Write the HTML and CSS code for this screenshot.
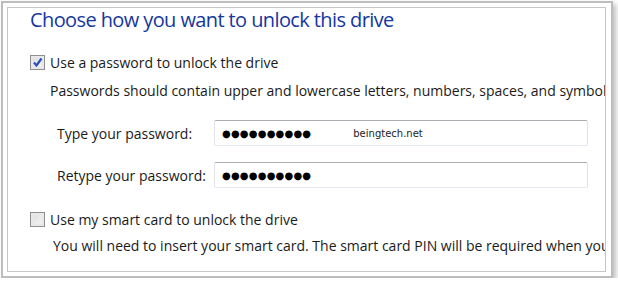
FILE: index.html
```
<!doctype html>
<html lang="en">
<head>
    <meta charset="UTF-8">
    <link rel="stylesheet" href="styles.css">
    <title>BitLocker - unlock options</title>
</head>
<body>
    <div class="frame">
        <div class="panel">
            <h1>Choose how you want to unlock this drive</h1>

            <div class="option">
                <span class="check checked">
                    <svg width="11" height="11" viewBox="0 0 11 11"><path d="M2 5.5 L4.5 8.5 L9.5 1.5" fill="none" stroke="#2d4fbf" stroke-width="2.2"/></svg>
                </span>
                <span>Use a password to unlock the drive</span>
            </div>
            <p class="desc">Passwords should contain upper and lowercase letters, numbers, spaces, and symbols.</p>

            <div class="field first">
                <label>Type your password:</label>
                <div class="box"><span class="dots">●●●●●●●●●●</span><span class="mark">beingtech.net</span></div>
            </div>
            <div class="field">
                <label>Retype your password:</label>
                <div class="box"><span class="dots">●●●●●●●●●●</span></div>
            </div>

            <div class="option second">
                <span class="check"></span>
                <span>Use my smart card to unlock the drive</span>
            </div>
            <p class="desc desc2">You will need to insert your smart card. The smart card PIN will be required when you unlock the drive.</p>
        </div>
    </div>
</body>
</html>
```

FILE: styles.css
```
body{
    margin: 0;
    background: #fff;
    font-family: "Open Sans", "Noto Sans", sans-serif;
    color: #1a1a1a;
}
.frame{
    box-sizing: border-box;
    width: 612px;
    height: 277px;
    margin: 1px 0 0 1px;
    border: 2px solid #bdbdbd;
    padding: 4px 5px 4px 4px;
    box-shadow: 3px 3px 5px rgba(0,0,0,0.25);
    display: flex;
}
.panel{
    flex: 1;
    border: 1px solid #c6c6c6;
    overflow: hidden;
    white-space: nowrap; /* long lines run under the right edge, as in the dialog */
    padding-left: 22px;
}
h1{
    margin: 0;
    font-size: 20px;
    font-weight: normal;
    letter-spacing: -0.6px;
    line-height: 24px;
    color: #1537a0;
}
.option{
    display: flex;
    align-items: center;
    height: 20px;
    margin-top: 20px;
    font-size: 14px;
}
.option.second{
    margin-top: 21px;
}
.check{
    box-sizing: border-box;
    width: 15px;
    height: 15px;
    margin-right: 5px;
    border: 1px solid #8f8f8f;
    background: linear-gradient(135deg, #dcdcdc, #f6f6f6);
    box-shadow: inset 0 0 0 2px #e8e8e8;
    display: flex;
    align-items: center;
    justify-content: center;
}
.desc{
    margin: 9px 0 0 20px;
    line-height: 20px;
    font-size: 14px;
}
.desc2{
    margin: 7px 0 0 23px;
}
.field{
    display: flex;
    align-items: center;
    margin-top: 16px;
    font-size: 14px;
}
.field.first{
    margin-top: 19px;
}
.field label{
    width: 157px;
    padding-left: 27px;
}
.box{
    box-sizing: border-box;
    width: 374px;
    height: 26px;
    border: 1px solid #e2e3ea;
    border-top-color: #abadb3;
    border-bottom-color: #e3e9ef;
    border-radius: 2px;
    display: flex;
    align-items: center;
    padding-left: 7px;
}
.dots{
    font-family: "DejaVu Sans", sans-serif;
    font-size: 10px;
    letter-spacing: 0.2px;
    color: #000;
}
.mark{
    margin-left: 42px;
    font-family: "DejaVu Sans", sans-serif;
    font-size: 10px;
    color: #222;
}
```
